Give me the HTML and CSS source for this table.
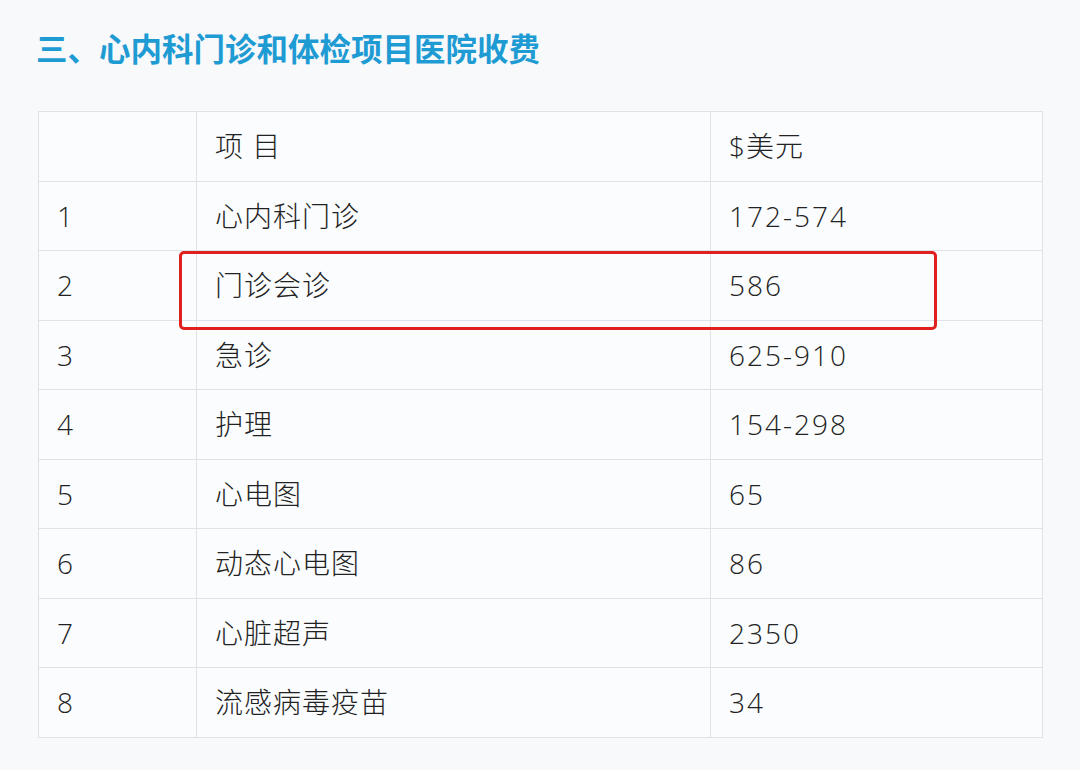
FILE: index.html
```html
<!DOCTYPE html>
<html lang="zh-CN">
<head>
<meta charset="utf-8">
<link rel="stylesheet" href="styles.css">
</head>
<body>
<div class="page">
  <h1 class="title">三、心内科门诊和体检项目医院收费</h1>
  <div class="table-wrap">
    <table class="fees">
      <colgroup>
        <col class="c1"><col class="c2"><col class="c3">
      </colgroup>
      <tr><td></td><td>项 目</td><td>$美元</td></tr>
      <tr><td>1</td><td>心内科门诊</td><td class="num">172-574</td></tr>
      <tr><td>2</td><td>门诊会诊</td><td class="num">586</td></tr>
      <tr><td>3</td><td>急诊</td><td class="num">625-910</td></tr>
      <tr><td>4</td><td>护理</td><td class="num">154-298</td></tr>
      <tr><td>5</td><td>心电图</td><td class="num">65</td></tr>
      <tr><td>6</td><td>动态心电图</td><td class="num">86</td></tr>
      <tr><td>7</td><td>心脏超声</td><td class="num">2350</td></tr>
      <tr><td>8</td><td>流感病毒疫苗</td><td class="num">34</td></tr>
    </table>
    <div class="highlight"></div>
  </div>
</div>
</body>
</html>
```

FILE: styles.css
```css
html, body {
  margin: 0;
  padding: 0;
  background: #f7f9fb;
}
.page {
  width: 1080px;
  height: 770px;
  padding: 29px 0 0 38px;
  box-sizing: border-box;
  font-family: "Noto Sans CJK SC", "Noto Sans", sans-serif;
}
.title {
  margin: 0 0 45px -2px;
  font-size: 31.5px;
  line-height: 37px;
  font-weight: 700;
  color: #1f9bd4;
}
.table-wrap {
  position: relative;
  width: 1004px;
}
.fees {
  width: 1004px;
  border-collapse: collapse;
  background: #fafcfd;
  table-layout: fixed;
}
.c1 { width: 158px; }
.c2 { width: 514px; }
.c3 { width: 332px; }
.fees td {
  height: 68.5px;
  padding: 0 0 0 18px;
  border: 1px solid #dfe3e8;
  font-family: "Open Sans", "Noto Sans CJK SC", sans-serif;
  font-weight: 300;
  font-size: 28px;
  letter-spacing: 1px;
  color: #222;
  vertical-align: middle;
  line-height: 30px;
}
.fees td.num {
  letter-spacing: 2px;
}
.highlight {
  position: absolute;
  left: 141px;
  top: 140px;
  width: 752px;
  height: 73px;
  border: 3px solid #e0201f;
  border-radius: 5px;
}
```
